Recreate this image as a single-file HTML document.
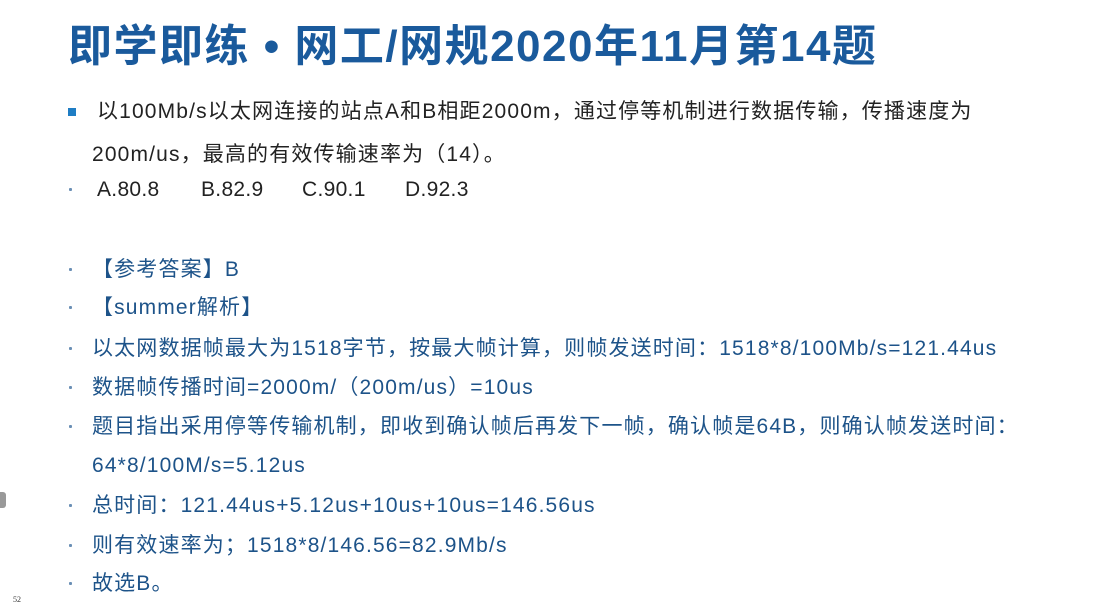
<!DOCTYPE html>
<html><head><meta charset="utf-8"><style>
body{margin:0;width:1099px;height:605px;background:#fff;position:relative;overflow:hidden;font-family:"Liberation Sans","Noto Sans CJK SC",sans-serif;}
.t{position:absolute;left:68px;top:10px;font-size:44px;font-weight:bold;color:#1a5a9c;white-space:nowrap;letter-spacing:1.5px;}
.l{position:absolute;white-space:nowrap;font-size:21px;line-height:24px;letter-spacing:1.15px;}
.q{color:#222;left:97px;}
.a{color:#1d5389;left:92px;}
.b{position:absolute;width:3px;height:3px;background:#6a8fb5;left:69px;border-radius:1px;}
.sq{position:absolute;left:68px;top:108px;width:8px;height:8px;background:#1f7dc4;}
</style></head><body>
<div class="t">即学即练 • 网工/网规2020年11月第14题</div>
<div class="sq"></div>
<div class="l q" style="top:100px">以100Mb/s以太网连接的站点A和B相距2000m，通过停等机制进行数据传输，传播速度为</div>
<div class="l q" style="top:143px;left:92px">200m/us，最高的有效传输速率为（14）。</div>
<div class="b" style="top:188px"></div>
<div class="l q" style="top:178px;left:97px;letter-spacing:0.3px">A.80.8</div>
<div class="l q" style="top:178px;left:201px;letter-spacing:0.3px">B.82.9</div>
<div class="l q" style="top:178px;left:302px;letter-spacing:0.3px">C.90.1</div>
<div class="l q" style="top:178px;left:405px;letter-spacing:0.3px">D.92.3</div>
<div class="b" style="top:268px"></div><div class="l a" style="top:258px">【参考答案】B</div>
<div class="b" style="top:306px"></div><div class="l a" style="top:296px">【summer解析】</div>
<div class="b" style="top:347px"></div><div class="l a" style="top:337px">以太网数据帧最大为1518字节，按最大帧计算，则帧发送时间：1518*8/100Mb/s=121.44us</div>
<div class="b" style="top:386px"></div><div class="l a" style="top:376px">数据帧传播时间=2000m/（200m/us）=10us</div>
<div class="b" style="top:425px"></div><div class="l a" style="top:415px">题目指出采用停等传输机制，即收到确认帧后再发下一帧，确认帧是64B，则确认帧发送时间：</div>
<div class="l a" style="top:454px">64*8/100M/s=5.12us</div>
<div class="b" style="top:504px"></div><div class="l a" style="top:494px">总时间：121.44us+5.12us+10us+10us=146.56us</div>
<div class="b" style="top:544px"></div><div class="l a" style="top:534px">则有效速率为；1518*8/146.56=82.9Mb/s</div>
<div class="b" style="top:582px"></div><div class="l a" style="top:572px">故选B。</div>
<div style="position:absolute;left:0;top:492px;width:6px;height:16px;background:#999;border-radius:0 3px 3px 0"></div>
<div style="position:absolute;left:13px;top:595px;font-size:8px;color:#333;font-family:'Liberation Serif',serif">52</div>
</body></html>
